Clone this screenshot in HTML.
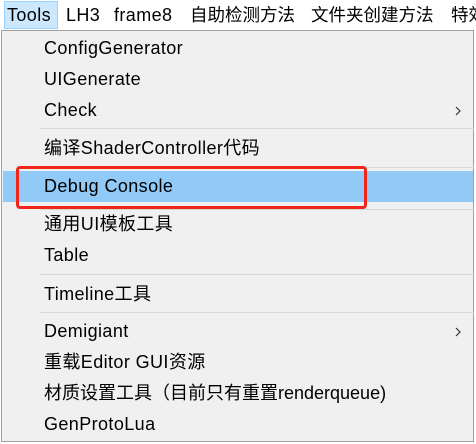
<!DOCTYPE html>
<html><head><meta charset="utf-8"><style>
body{margin:0;width:476px;height:444px;background:#fff;overflow:hidden;position:relative;font-family:"Segoe UI","Liberation Sans","Noto Sans CJK SC",sans-serif;font-size:17px;color:#000}
.t{position:absolute;white-space:nowrap;line-height:20px}
.m{font-size:18px;letter-spacing:0.4px}
#menu{position:absolute;left:1px;top:30px;width:473px;height:412px;background:#f0f0f0;border:1px solid #a0a0a0;box-sizing:border-box}
.sep{position:absolute;left:40px;right:2px;height:1px;background:#d7d7d7}
.arr{position:absolute;left:455px;width:6px;height:10px}
</style></head><body>
<div style="position:absolute;left:4px;top:1px;width:54px;height:28px;background:#cce8ff;border:1px solid #99d1ff;box-sizing:border-box"></div>
<div class="t m" style="left:7px;top:5px">Tools</div>
<div class="t m" style="left:66px;top:5px">LH3</div>
<div class="t m" style="left:114px;top:5px">frame8</div>
<div class="t" style="left:190px;top:5px;font-size:17.5px">自助检测方法</div>
<div class="t" style="left:311px;top:5px;font-size:17.5px">文件夹创建方法</div>
<div class="t" style="left:451px;top:5px;font-size:17.5px">特效</div>
<div id="menu"></div>
<div class="sep" style="top:128px"></div>
<div class="sep" style="top:167px"></div>
<div class="sep" style="top:209px"></div>
<div class="sep" style="top:274px"></div>
<div class="sep" style="top:312px"></div>
<div style="position:absolute;left:3px;top:171px;width:470px;height:31px;background:#91c9f7"></div>
<div style="position:absolute;left:16px;top:166px;width:351px;height:43px;border:3px solid #f0261c;border-radius:4px;box-sizing:border-box"></div>
<div class="t m" style="left:44px;top:38px">ConfigGenerator</div>
<div class="t m" style="left:44px;top:69px">UIGenerate</div>
<div class="t m" style="left:44px;top:100px">Check</div>
<svg class="arr" style="top:106px" viewBox="0 0 6 10"><path d="M1 1L5 5L1 9" fill="none" stroke="#333" stroke-width="1.2"/></svg>
<div class="t m" style="left:44px;top:138px">编译ShaderController代码</div>
<div class="t m" style="left:44px;top:176px">Debug Console</div>
<div class="t m" style="left:44px;top:214px">通用UI模板工具</div>
<div class="t m" style="left:44px;top:245px">Table</div>
<div class="t m" style="left:44px;top:284px">Timeline工具</div>
<div class="t m" style="left:44px;top:321px">Demigiant</div>
<svg class="arr" style="top:327px" viewBox="0 0 6 10"><path d="M1 1L5 5L1 9" fill="none" stroke="#333" stroke-width="1.2"/></svg>
<div class="t m" style="left:44px;top:352px">重载Editor GUI资源</div>
<div class="t m" style="left:44px;top:383px;letter-spacing:0">材质设置工具（目前只有重置renderqueue)</div>
<div class="t m" style="left:44px;top:414px">GenProtoLua</div>
</body></html>
